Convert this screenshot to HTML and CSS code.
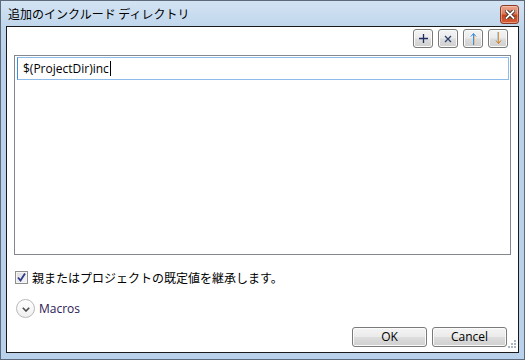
FILE: index.html
```html
<!DOCTYPE html>
<html lang="ja">
<head>
<meta charset="UTF-8" />
<meta name="viewport" content="width=device-width, initial-scale=1.0">
<title>追加のインクルード ディレクトリ</title>
<link rel="stylesheet" href="styles.css">
</head>
<body>

<div class="window">
  <div class="titlebar">
    <span class="title">追加のインクルード ディレクトリ</span>
    <button class="close" title="閉じる">
      <svg width="10" height="9" viewBox="0 0 10 9">
        <path d="M1.5 1 L8.5 8 M8.5 1 L1.5 8" stroke="#3a2a26" stroke-width="3.6" stroke-linecap="square"/>
        <path d="M1.5 1 L8.5 8 M8.5 1 L1.5 8" stroke="#fff" stroke-width="1.8" stroke-linecap="square"/>
      </svg>
    </button>
  </div>

  <div class="client">
    <div class="toolbar">
      <button class="tool" title="新しい行">
        <svg width="9" height="9" viewBox="0 0 9 9"><path d="M4.5 0 V9 M0 4.5 H9" stroke="#1c2f63" stroke-width="1.3"/></svg>
      </button>
      <button class="tool" title="削除">
        <svg width="8" height="8" viewBox="0 0 8 8"><path d="M1 1 L7 7 M7 1 L1 7" stroke="#2b3f6e" stroke-width="1.3"/></svg>
      </button>
      <button class="tool" title="上へ移動">
        <svg width="7" height="13" viewBox="0 0 7 13"><path d="M3.5 1.5 V13" stroke="#3b8ee0" stroke-width="1"/><path d="M4.5 3 V13" stroke="#f0b870" stroke-width="0.8"/><path d="M1 4.5 L3.5 1.5 L6 4.5" fill="none" stroke="#3b8ee0" stroke-width="1"/></svg>
      </button>
      <button class="tool" title="下へ移動">
        <svg width="7" height="13" viewBox="0 0 7 13"><path d="M3.5 0 V11.5" stroke="#e0952e" stroke-width="1"/><path d="M2.5 0 V9" stroke="#9fc4ea" stroke-width="0.8"/><path d="M1 8.5 L3.5 11.5 L6 8.5" fill="none" stroke="#c97a22" stroke-width="1"/></svg>
      </button>
    </div>

    <div class="list">
      <div class="edit">$(ProjectDir)inc<span class="caret"></span></div>
    </div>

    <label class="inherit">
      <span class="check">
        <svg width="9" height="9" viewBox="0 0 9 9"><path d="M1 4.5 L3.5 7.5 L8 0.5" fill="none" stroke="#2d3a8c" stroke-width="1.8"/></svg>
      </span>
      親またはプロジェクトの既定値を継承します。
    </label>

    <div class="macros">
      <span class="expander">
        <svg width="8" height="5" viewBox="0 0 8 5"><path d="M0.8 0.8 L4 4 L7.2 0.8" fill="none" stroke="#4a4a4a" stroke-width="1.6"/></svg>
      </span>
      Macros
    </div>

    <div class="actions">
      <button class="btn">OK</button>
      <button class="btn">Cancel</button>
    </div>

    <svg class="grip" width="10" height="10" viewBox="0 0 10 10">
      <g fill="#a9b6c6">
        <rect x="8" y="0" width="2" height="2"/>
        <rect x="5" y="3" width="2" height="2"/><rect x="8" y="3" width="2" height="2"/>
        <rect x="2" y="6" width="2" height="2"/><rect x="5" y="6" width="2" height="2"/><rect x="8" y="6" width="2" height="2"/>
      </g>
    </svg>
  </div>
</div>

</body>
</html>
```

FILE: styles.css
```css
html, body { margin:0; padding:0; }
body { font-family:"Open Sans", "Noto Sans CJK JP", sans-serif; font-size:12px; color:#000; }

.window {
  width:525px; height:360px; box-sizing:border-box;
  border:1px solid #5d6a7b;
  background:linear-gradient(to bottom, #d3e3f3 0px, #c0d6ec 26px, #b9d1ea 60px, #b9d1ea 100%);
  padding:0 5px 6px 5px;
  display:flex; flex-direction:column;
}

.titlebar { height:25px; display:flex; align-items:center; justify-content:space-between; padding-left:2px; }
.title { font-family:"Noto Sans CJK JP", sans-serif; font-size:12px; color:#000; margin-top:-1px; }
.close {
  width:19px; height:19px; margin:2px 0 0 0; padding:0; box-sizing:border-box;
  border:1px solid #8b3a26; border-radius:3px;
  background:linear-gradient(to bottom, #eba890 0%, #dc7a5c 45%, #c8441c 55%, #d45e3a 100%);
  box-shadow:inset 0 0 0 1px rgba(255,220,200,0.45);
  display:flex; align-items:center; justify-content:center;
}

.client {
  flex:1; position:relative;
  border:1px solid #1a1a1a; background:#fff;
  display:flex; flex-direction:column;
}

.toolbar { display:flex; justify-content:flex-end; gap:5px; margin-top:2px; padding-right:10px; height:19px; }
.tool, .btn {
  box-sizing:border-box; padding:0; border:1px solid #7a7a7a; border-radius:3px;
  background:linear-gradient(to bottom, #f4f4f4 0%, #ebebeb 48%, #dddddd 52%, #cfcfcf 100%);
  box-shadow:inset 0 0 0 1px #fbfbfb;
}
.tool { width:20px; height:19px; display:flex; align-items:center; justify-content:center; }

.list {
  margin:7px 7px 0; height:200px; box-sizing:border-box;
  border:1px solid #828790; padding:1px 1px 0 2px;
}
.edit {
  height:23px; box-sizing:border-box; border:1px solid #8dbbe9; border-left-color:#3d8ee0;
  padding-left:5px; line-height:21px; font-size:12px; color:#000;
  display:flex; align-items:center;
}
.caret { width:1px; height:15px; background:#000; margin-left:1px; }

.inherit {
  display:flex; align-items:center; height:14px; margin:15px 0 0 8px;
  font-family:"Noto Sans CJK JP", sans-serif; font-size:12px;
}
.check {
  width:13px; height:13px; box-sizing:border-box; margin-right:4px;
  border:1px solid #8e8f8f; background:linear-gradient(135deg, #dcdcdc, #f6f6f6);
  box-shadow:inset 0 0 0 1px #f4f4f4;
  display:flex; align-items:center; justify-content:center;
}

.macros { display:flex; align-items:center; height:19px; margin:15px 0 0 9px; color:#2c1855; }
.expander {
  width:19px; height:19px; box-sizing:border-box; border-radius:50%; margin-right:4px;
  border:1px solid #b8b8b8; background:linear-gradient(to bottom, #ffffff, #f0f0f0);
  display:flex; align-items:center; justify-content:center; padding-top:1px;
}

.actions { margin-top:auto; margin-bottom:5px; display:flex; justify-content:flex-end; gap:5px; padding-right:11px; }
.btn { width:75px; height:20px; font-family:"Open Sans", sans-serif; font-size:12px; color:#000; line-height:16px; }

.grip { position:absolute; right:2px; bottom:2px; }
```
